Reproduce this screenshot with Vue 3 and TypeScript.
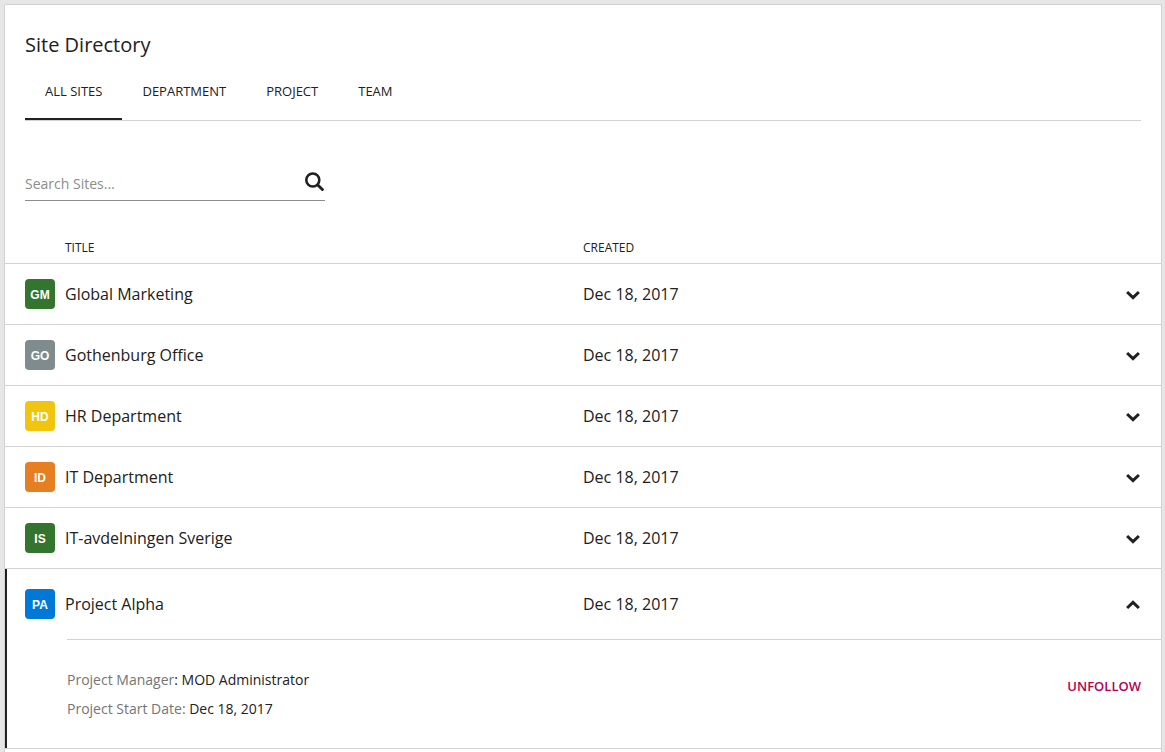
<script setup lang="ts">
import { computed, ref } from 'vue'

interface Site {
  initials: string
  tone: string
  title: string
  kind: string
  created: string
  manager: string
}

const tabs = ['All sites', 'Department', 'Project', 'Team']
const activeTab = ref('All sites')
const query = ref('')
const openTitle = ref('Project Alpha')
const followed = ref(true)

const sites: Site[] = [
  { initials: 'GM', tone: 'green', title: 'Global Marketing', kind: 'Team', created: 'Dec 18, 2017', manager: 'MOD Administrator' },
  { initials: 'GO', tone: 'gray', title: 'Gothenburg Office', kind: 'Team', created: 'Dec 18, 2017', manager: 'MOD Administrator' },
  { initials: 'HD', tone: 'yellow', title: 'HR Department', kind: 'Department', created: 'Dec 18, 2017', manager: 'MOD Administrator' },
  { initials: 'ID', tone: 'orange', title: 'IT Department', kind: 'Department', created: 'Dec 18, 2017', manager: 'MOD Administrator' },
  { initials: 'IS', tone: 'green', title: 'IT-avdelningen Sverige', kind: 'Department', created: 'Dec 18, 2017', manager: 'MOD Administrator' },
  { initials: 'PA', tone: 'blue', title: 'Project Alpha', kind: 'Project', created: 'Dec 18, 2017', manager: 'MOD Administrator' },
]

const visibleSites = computed(() =>
  sites.filter(
    (s) =>
      (activeTab.value === 'All sites' || s.kind === activeTab.value) &&
      s.title.toLowerCase().includes(query.value.trim().toLowerCase()),
  ),
)

function toggle(title: string): void {
  openTitle.value = openTitle.value === title ? '' : title
}
</script>

<template>
  <main class="page">
    <section class="card">
      <header class="head">
        <h1>Site Directory</h1>
        <nav class="tabs" role="tablist">
          <button
            v-for="tab in tabs"
            :key="tab"
            type="button"
            role="tab"
            class="tab"
            :class="{ active: tab === activeTab }"
            :aria-selected="tab === activeTab"
            @click="activeTab = tab"
          >
            {{ tab }}
          </button>
        </nav>
        <form class="search" @submit.prevent>
          <input v-model="query" type="text" placeholder="Search Sites..." aria-label="Search sites" />
          <button type="submit" aria-label="Search">
            <svg width="20" height="20" viewBox="0 0 20 20" fill="none" stroke="#212121">
              <circle cx="7.8" cy="8" r="6.5" stroke-width="2.6" />
              <path d="M12.8 13L17.4 17.5" stroke-width="3" stroke-linecap="round" />
            </svg>
          </button>
        </form>
      </header>

      <table>
        <colgroup>
          <col class="col-badge" />
          <col class="col-title" />
          <col />
          <col class="col-toggle" />
        </colgroup>
        <thead>
          <tr>
            <th></th>
            <th scope="col">Title</th>
            <th scope="col">Created</th>
            <th></th>
          </tr>
        </thead>
        <tbody v-for="site in visibleSites" :key="site.title" :class="{ open: site.title === openTitle }">
          <tr class="row">
            <td class="badge-cell"><span class="badge" :class="site.tone">{{ site.initials }}</span></td>
            <td>{{ site.title }}</td>
            <td>{{ site.created }}</td>
            <td class="toggle-cell">
              <button
                type="button"
                class="toggle"
                :aria-label="`Details for ${site.title}`"
                :aria-expanded="site.title === openTitle"
                @click="toggle(site.title)"
              >
                <svg width="16" height="10" viewBox="0 0 16 10" fill="none" stroke="#212121" stroke-width="3">
                  <path v-if="site.title === openTitle" d="M2.1 8L8 2.3L13.9 8" />
                  <path v-else d="M2.1 2L8 7.7L13.9 2" />
                </svg>
              </button>
            </td>
          </tr>
          <tr v-if="site.title === openTitle" class="detail-row">
            <td colspan="4">
              <div class="detail">
                <dl>
                  <div>
                    <dt>Project Manager</dt><dd>: {{ site.manager }}</dd>
                  </div>
                  <div>
                    <dt>Project Start Date:</dt><dd>&nbsp;{{ site.created }}</dd>
                  </div>
                </dl>
                <button type="button" class="follow" @click="followed = !followed">
                  {{ followed ? 'Unfollow' : 'Follow' }}
                </button>
              </div>
            </td>
          </tr>
        </tbody>
      </table>
    </section>
  </main>
</template>

<style>
body {
  margin: 0;
  background: #e6e6e6;
}
</style>

<style scoped>
.page {
  box-sizing: border-box;
  min-height: 100vh;
  display: flex;
  padding: 4px 3px 0 4px;
  font-family: "Open Sans", "Noto Sans", sans-serif;
  color: #212121;
}

.card {
  flex: 1;
  min-width: 0;
  background: #fff;
  border: 1px solid #d2d2d2;
  border-bottom: 0;
  border-radius: 2px 2px 0 0;
}

button,
input {
  margin: 0;
  padding: 0;
  border: 0;
  background: none;
  color: inherit;
  font: inherit;
}

button {
  cursor: pointer;
}

svg {
  display: block;
}

.head {
  padding: 24px 20px 0;
}

h1 {
  margin: 0;
  font-size: 20px;
  line-height: 32px;
  font-weight: 400;
}

.tabs {
  display: flex;
  border-bottom: 1px solid #d2d2d2;
}

.tab {
  box-sizing: border-box;
  height: 59px;
  padding: 2px 20px 0;
  border-bottom: 2px solid transparent;
  font-size: 13px;
  text-transform: uppercase;
}

.tab.active {
  border-bottom-color: #212121;
}

.search {
  display: flex;
  align-items: center;
  width: 300px;
  height: 33px;
  margin-top: 46px;
  border-bottom: 1px solid #8c8c8c;
}

.search input {
  flex: 1;
  min-width: 0;
  height: 33px;
  outline: none;
  font-size: 14px;
}

.search input::placeholder {
  color: #8c8c8c;
  opacity: 1;
}

.search button {
  padding-bottom: 4px;
}

table {
  width: 100%;
  margin-top: 32px;
  table-layout: fixed;
  border-collapse: separate;
  border-spacing: 0;
}

.col-badge {
  width: 60px;
}

.col-title {
  width: calc(50% - 60px);
}

.col-toggle {
  width: 60px;
}

th {
  height: 28px;
  padding: 0 0 2px;
  border-bottom: 1px solid #d2d2d2;
  font-size: 12px;
  font-weight: 400;
  text-align: left;
  text-transform: uppercase;
}

td {
  padding: 0;
}

.row td {
  height: 60px;
  border-bottom: 1px solid #d2d2d2;
  font-size: 16px;
}

.open .row td {
  height: 70px;
  border-bottom: 0;
}

.open td:first-child {
  box-shadow: inset 2px 0 #212121;
}

.badge-cell {
  padding-left: 20px;
}

.badge {
  box-sizing: border-box;
  display: flex;
  align-items: center;
  justify-content: center;
  width: 30px;
  height: 30px;
  padding-top: 2px;
  border-radius: 4px;
  color: #fff;
  font: 700 12px "Liberation Sans", sans-serif;
}

.green {
  background: #33752e;
}

.gray {
  background: #7f8c8d;
}

.yellow {
  background: #f1c40f;
}

.orange {
  background: #e67e22;
}

.blue {
  background: #0078d7;
}

.toggle {
  display: block;
  margin-left: auto;
  margin-right: 20px;
  padding: 6px 0 4px;
}

.detail-row td {
  border-bottom: 1px solid #d2d2d2;
}

.detail {
  display: flex;
  align-items: flex-start;
  justify-content: space-between;
  margin-left: 62px;
  padding: 25px 20px 25px 0;
  border-top: 1px solid #d2d2d2;
  font-size: 14px;
}

dl {
  margin: 0;
  line-height: 29px;
}

dl div {
  display: flex;
}

dt {
  color: #757575;
}

dd {
  margin: 0;
}

.follow {
  color: #b4004e;
  font-size: 13px;
  font-weight: 600;
  line-height: 42px;
  text-transform: uppercase;
}
</style>
